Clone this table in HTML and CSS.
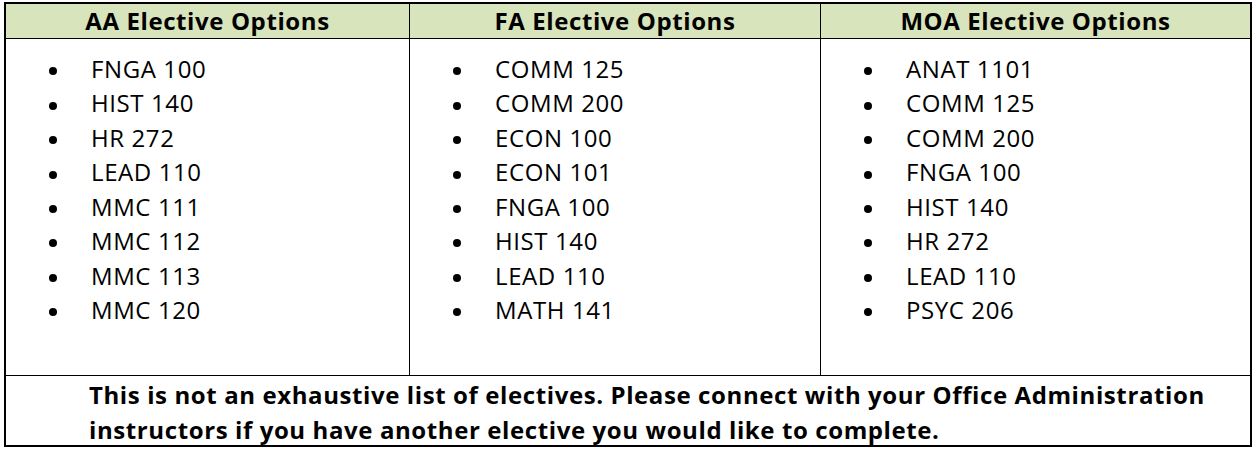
FILE: index.html
```html
<!DOCTYPE html>
<html lang="en">
<head>
<meta charset="utf-8">
<title>Elective Options</title>
<link rel="stylesheet" href="styles.css">
</head>
<body>
<div class="table">
  <div class="head">AA Elective Options</div>
  <div class="head">FA Elective Options</div>
  <div class="head">MOA Elective Options</div>

  <div class="cell">
    <ul class="list">
      <li>FNGA 100</li>
      <li>HIST 140</li>
      <li>HR 272</li>
      <li>LEAD 110</li>
      <li>MMC 111</li>
      <li>MMC 112</li>
      <li>MMC 113</li>
      <li>MMC 120</li>
    </ul>
  </div>
  <div class="cell">
    <ul class="list">
      <li>COMM 125</li>
      <li>COMM 200</li>
      <li>ECON 100</li>
      <li>ECON 101</li>
      <li>FNGA 100</li>
      <li>HIST 140</li>
      <li>LEAD 110</li>
      <li>MATH 141</li>
    </ul>
  </div>
  <div class="cell">
    <ul class="list">
      <li>ANAT 1101</li>
      <li>COMM 125</li>
      <li>COMM 200</li>
      <li>FNGA 100</li>
      <li>HIST 140</li>
      <li>HR 272</li>
      <li>LEAD 110</li>
      <li>PSYC 206</li>
    </ul>
  </div>

  <div class="foot">This is not an exhaustive list of electives. Please connect with your Office Administration instructors if you have another elective you would like to complete.</div>
</div>
</body>
</html>
```

FILE: styles.css
```css
html, body {
  margin: 0;
  padding: 0;
  background: #fff;
}

body {
  padding: 2px 0 0 4px;
  font-family: "Open Sans", "Liberation Sans", sans-serif;
  color: #000;
}

.table {
  display: grid;
  grid-template-columns: 403px 410px 429px;
  grid-template-rows: 34px 336px 69px;
  gap: 1px;
  width: 1244px;
  border: 2px solid #000;
  background: #000;
}

.head {
  background: #d8e4bc;
  font-weight: 700;
  font-size: 24px;
  letter-spacing: 0.6px;
  line-height: 34px;
  text-align: center;
}

.cell {
  background: #fff;
  padding-top: 13px;
}

.list {
  list-style: none;
  margin: 0;
  padding: 0;
  font-size: 24px;
  letter-spacing: 0.6px;
  line-height: 34.43px;
}

.list li {
  display: flex;
  align-items: center;
}

.list li::before {
  content: "";
  flex: none;
  width: 8px;
  height: 8px;
  border-radius: 50%;
  background: #000;
  margin: 4px 34px 0 43px;
}

.foot {
  grid-column: 1 / -1;
  background: #fff;
  font-weight: 700;
  font-size: 24px;
  letter-spacing: 0.6px;
  line-height: 35px;
  padding: 1px 20px 0 83px;
}
```
